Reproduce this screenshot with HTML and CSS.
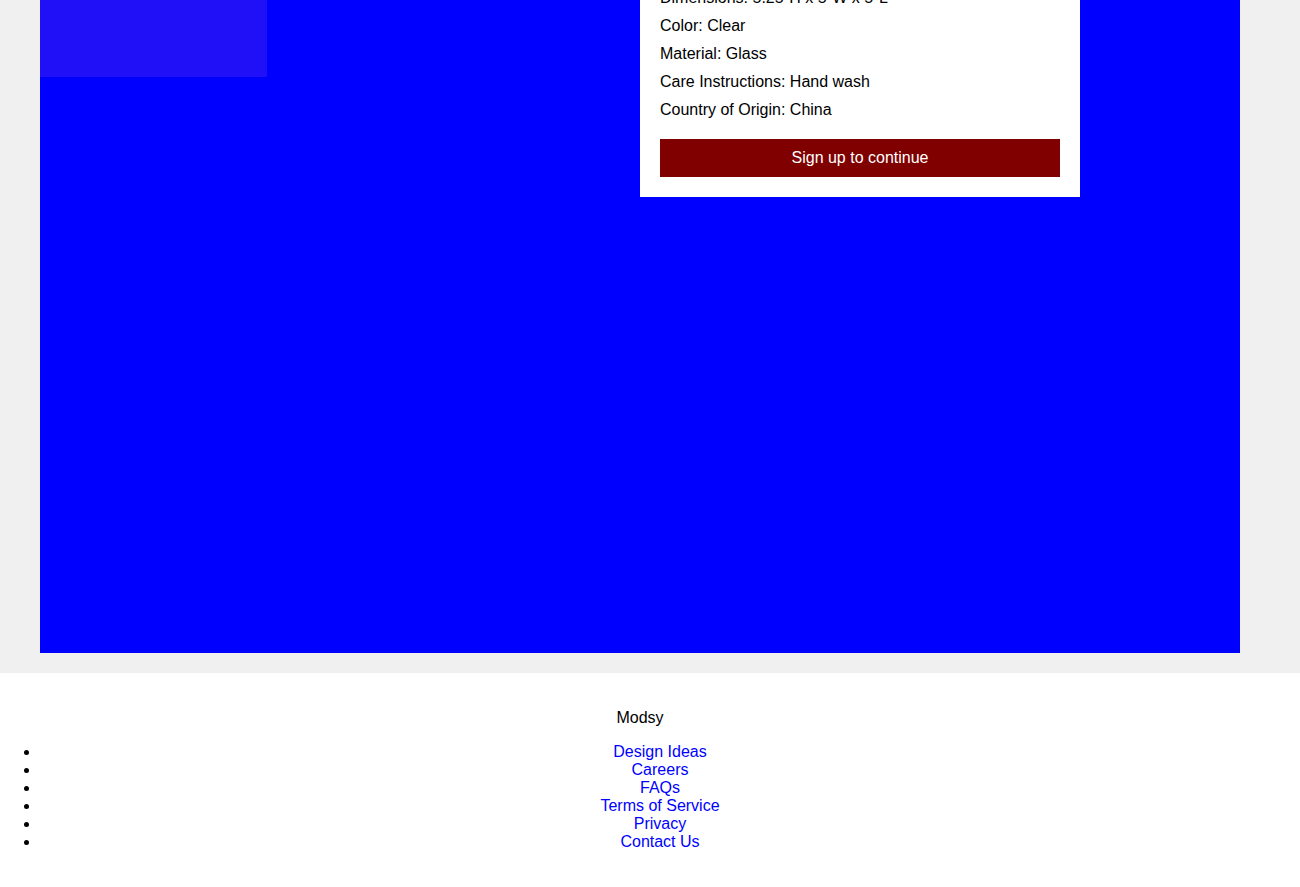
FILE: index.html
```html
<!DOCTYPE html>
<html lang="en">
<head>
<meta charset="utf-8">
<title>Modsy – Product</title>
<link rel="stylesheet" href="styles.css">
</head>
<body>
<main class="product-section">
  <div class="product-stage">
    <div class="stage-left">
      <div class="thumb"></div>
    </div>
    <div class="stage-right">
      <div class="card">
        <h2 class="card-title">Glass Vase</h2>
        <p class="card-line">Brand: Modsy</p>
        <p class="card-line">Price: $24</p>
        <p class="card-line">Style: Modern</p>
        <p class="card-line">Dimensions: 5.25"H x 5"W x 5"L</p>
        <p class="card-line">Color: Clear</p>
        <p class="card-line">Material: Glass</p>
        <p class="card-line">Care Instructions: Hand wash</p>
        <p class="card-line">Country of Origin: China</p>
        <button class="cta">Sign up to continue</button>
      </div>
    </div>
  </div>
</main>
<footer class="site-footer">
  <p class="brand">Modsy</p>
  <ul class="footer-links">
    <li><a href="#">Design Ideas</a></li>
    <li><a href="#">Careers</a></li>
    <li><a href="#">FAQs</a></li>
    <li><a href="#">Terms of Service</a></li>
    <li><a href="#">Privacy</a></li>
    <li><a href="#">Contact Us</a></li>
  </ul>
</footer>
</body>
</html>
```
FILE: styles.css
```css
html, body {
  margin: 0;
  padding: 0;
}
body {
  font-family: "Liberation Sans", Arial, sans-serif;
  font-size: 16px;
  color: #000;
  background: #fff;
}
.product-section {
  background: #f0f0f0;
  padding: 0 40px 20px;
  margin-top: -148px;
}
.product-stage {
  background: #0000ff;
  width: 1200px;
  height: 801px;
  display: grid;
  grid-template-columns: 1fr 1fr;
}
.stage-left {
  display: flex;
  align-items: flex-start;
}
.thumb {
  width: 227px;
  height: 225px;
  background: #2010f8;
}
.stage-right {
  display: flex;
  align-items: flex-start;
}
.card {
  width: 440px;
  box-sizing: border-box;
  background: #fff;
  padding: 20px;
}
.card-title {
  margin: 0;
  font-size: 16px;
  font-weight: normal;
  line-height: 28px;
}
.card-line {
  margin: 0;
  line-height: 28px;
}
.cta {
  display: block;
  width: 100%;
  height: 38px;
  margin-top: 15px;
  border: 0;
  padding: 0;
  background: #800000;
  color: #fff;
  font-family: "Liberation Sans", Arial, sans-serif;
  font-size: 16px;
  cursor: pointer;
}
.site-footer {
  width: 1280px;
  padding-top: 20px;
  text-align: center;
}
.brand {
  margin: 16px 0;
}
.footer-links {
  margin: 16px 0;
  padding-left: 40px;
}
.footer-links a {
  color: #0000ff;
  text-decoration: none;
}
```
